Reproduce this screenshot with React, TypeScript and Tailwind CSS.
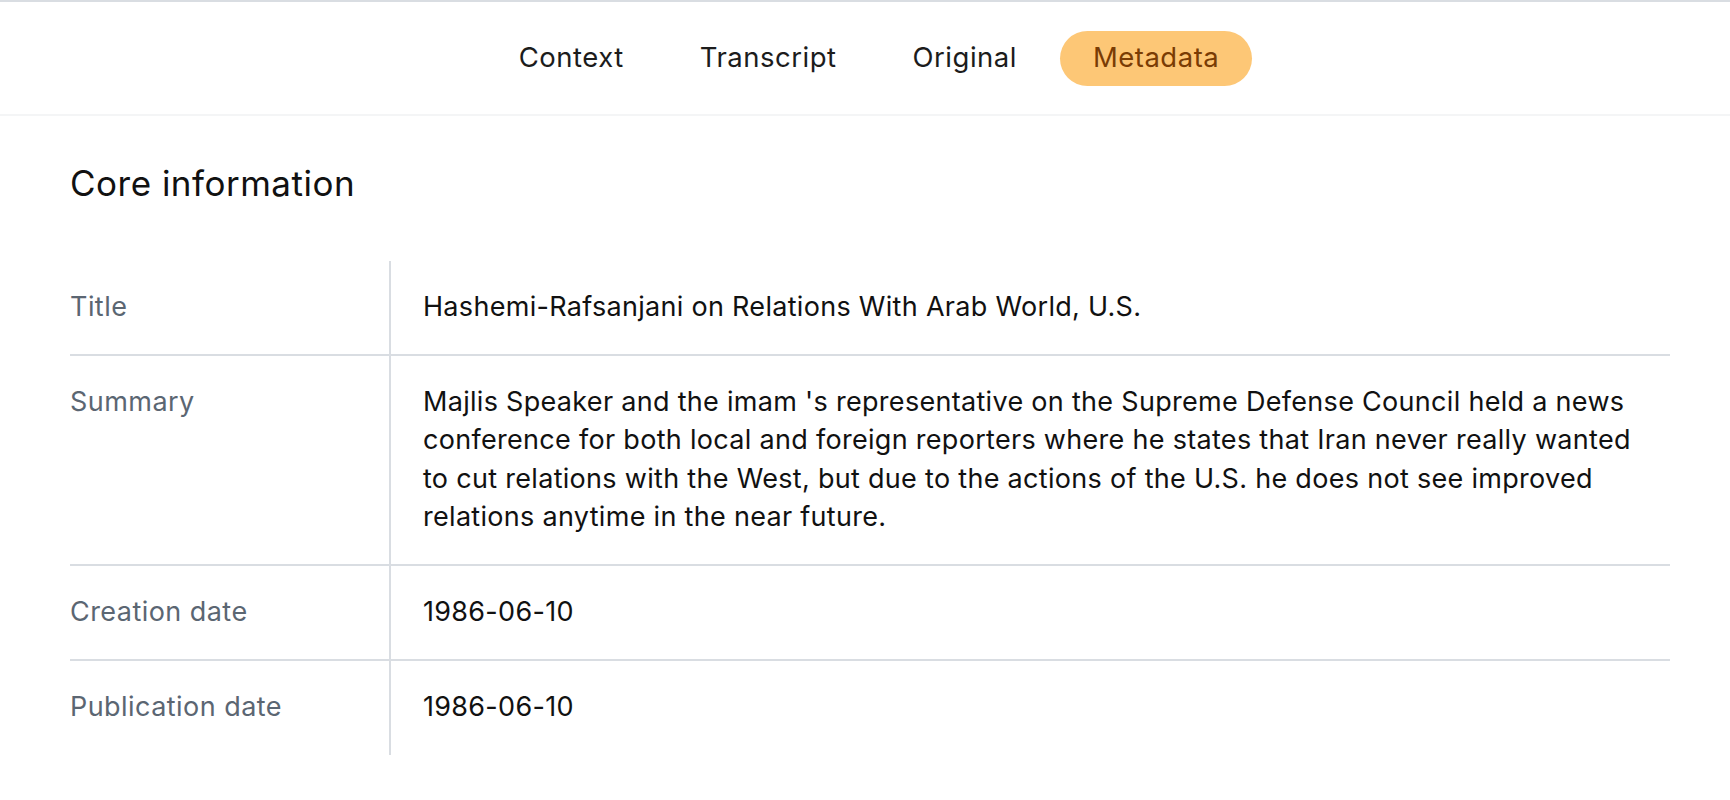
import React from "react";

const tabs = ["Context", "Transcript", "Original", "Metadata"];

const rows: { label: string; value: string }[] = [
  { label: "Title", value: "Hashemi-Rafsanjani on Relations With Arab World, U.S." },
  {
    label: "Summary",
    value:
      "Majlis Speaker and the imam 's representative on the Supreme Defense Council held a news conference for both local and foreign reporters where he states that Iran never really wanted to cut relations with the West, but due to the actions of the U.S. he does not see improved relations anytime in the near future.",
  },
  { label: "Creation date", value: "1986-06-10" },
  { label: "Publication date", value: "1986-06-10" },
];

export default function App() {
  return (
    <div className="min-h-[800px] w-full bg-white font-['Inter',_'Liberation_Sans',_sans-serif] text-[#111111]">
      <header className="flex h-[116px] items-center justify-center border-t-2 border-b-2 border-t-[#d9dde2] border-b-[#f4f5f6]">
        <nav className="ml-[8px] flex items-center gap-[10px]">
          {tabs.map((t) => (
            <button
              key={t}
              className={
                t === "Metadata"
                  ? "flex h-[55px] items-center rounded-full bg-[#fdc776] px-[33px] text-[27.5px] tracking-[0.5px] text-[#7a3c04]"
                  : "flex h-[55px] items-center rounded-full px-[33px] text-[27.5px] tracking-[0.5px] text-[#1c1c1c]"
              }
            >
              {t}
            </button>
          ))}
        </nav>
      </header>
      <main className="pl-[70px] pr-[60px] pt-[42px]">
        <h2 className="text-[35px] leading-[50px] font-normal tracking-[0.5px] text-[#111111]">Core information</h2>
        <div className="mt-[53px]">
          {rows.map((r, i) => (
            <div
              key={r.label}
              className={
                i < rows.length - 1
                  ? "grid grid-cols-[319px_1fr] border-b-2 border-[#d9dde2]"
                  : "grid grid-cols-[319px_1fr]"
              }
            >
              <div className="py-[27px] text-[27px] leading-[38.6px] tracking-[0.45px] text-[#5b6672]">{r.label}</div>
              <div
                className={
                  i < rows.length - 1
                    ? "border-l-2 border-[#d9dde2] py-[27px] pl-[32px] pr-[30px] text-[27px] leading-[38.6px] tracking-[0.3px] text-[#111111]"
                    : "border-l-2 border-[#d9dde2] pt-[27px] pb-[29px] pl-[32px] pr-[30px] text-[27px] leading-[38.6px] tracking-[0.3px] text-[#111111]"
                }
              >
                {r.value}
              </div>
            </div>
          ))}
        </div>
      </main>
    </div>
  );
}
